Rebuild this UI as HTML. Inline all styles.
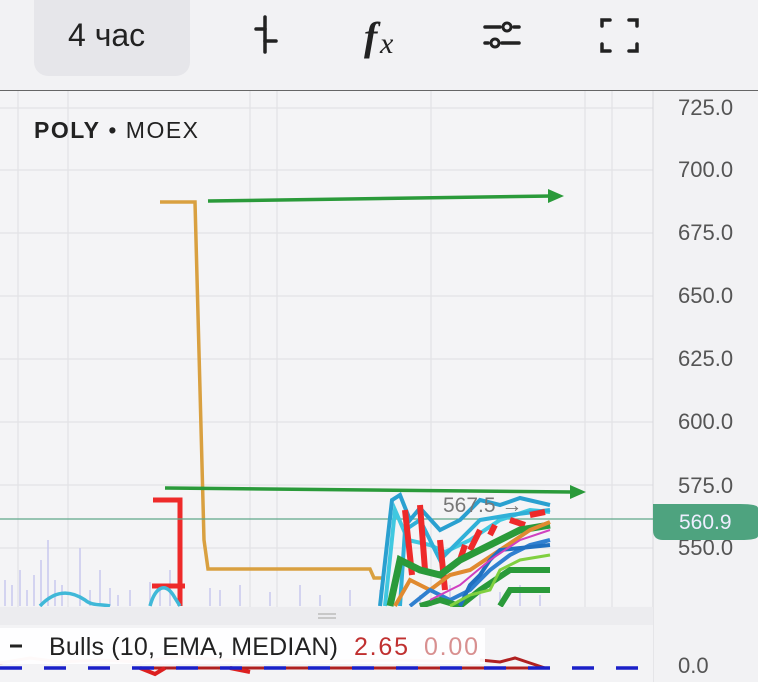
<!DOCTYPE html>
<html><head><meta charset="utf-8"><style>
html,body{margin:0;padding:0;width:758px;height:682px;overflow:hidden;background:#f3f3f5;font-family:"Liberation Sans",sans-serif}
.tb{position:absolute;left:0;top:0;width:758px;height:90px;background:#f2f2f4;border-bottom:1.5px solid #666}
.btn{position:absolute;left:34px;top:0;width:156px;height:76px;background:#e6e6ea;border-radius:0 0 14px 14px}
.lbl{position:absolute;left:68px;top:17px;font-size:32px;color:#222}
</style></head><body>
<div class="tb"><div class="btn"></div><div class="lbl">4 час</div>
<svg width="758" height="90" style="position:absolute;left:0;top:0">
<g stroke="#222" stroke-width="3.5" fill="none" stroke-linecap="round">
<line x1="265" y1="17" x2="265" y2="52"/><line x1="256" y1="29" x2="265" y2="29"/><line x1="265" y1="41" x2="276" y2="41"/>
<line x1="485" y1="27" x2="500" y2="27"/><line x1="514" y1="27" x2="519" y2="27"/><circle cx="507" cy="27" r="4" stroke-width="3"/>
<line x1="485" y1="43" x2="488" y2="43"/><line x1="502" y1="43" x2="519" y2="43"/><circle cx="495" cy="43" r="4" stroke-width="3"/>
<path d="M602 26V20H610M629 20H637V26M637 44V51H629M610 51H602V44"/>
</g>
<text x="364" y="50" font-family="Liberation Serif" font-style="italic" font-weight="bold" font-size="40" fill="#222">f</text>
<text x="380" y="53" font-family="Liberation Serif" font-style="italic" font-size="30" fill="#222">x</text>
</svg></div>
<svg width="758" height="592" style="position:absolute;left:0;top:90px" viewBox="0 90 758 592">
<rect x="0" y="91" width="653" height="515" fill="#f4f4f6"/>
<rect x="653" y="91" width="105" height="591" fill="#f2f2f4"/>
<g stroke="#e2e2e6" stroke-width="1.2">
<line x1="18" y1="91" x2="18" y2="682"/><line x1="68" y1="91" x2="68" y2="682"/><line x1="250" y1="91" x2="250" y2="682"/><line x1="277" y1="91" x2="277" y2="682"/><line x1="431" y1="91" x2="431" y2="682"/><line x1="585" y1="91" x2="585" y2="682"/><line x1="612" y1="91" x2="612" y2="682"/>
<line x1="0" y1="108" x2="653" y2="108"/><line x1="0" y1="170" x2="653" y2="170"/><line x1="0" y1="233" x2="653" y2="233"/><line x1="0" y1="296" x2="653" y2="296"/><line x1="0" y1="359" x2="653" y2="359"/><line x1="0" y1="422" x2="653" y2="422"/><line x1="0" y1="485" x2="653" y2="485"/><line x1="0" y1="548" x2="653" y2="548"/>
</g>
<line x1="653" y1="91" x2="653" y2="682" stroke="#d8d8dc"/>
<g font-size="22" fill="#555">
<text x="678" y="115">725.0</text><text x="678" y="177">700.0</text><text x="678" y="240">675.0</text><text x="678" y="303">650.0</text><text x="678" y="366">625.0</text><text x="678" y="429">600.0</text><text x="678" y="493">575.0</text><text x="678" y="555">550.0</text><text x="678" y="673">0.0</text></g>
<text x="34" y="138" font-size="23" fill="#222" textLength="164"><tspan font-weight="bold">POLY</tspan> • MOEX</text>
<g stroke="#c8c8ee" stroke-width="1.5">
<path d="M5 606V580M12 606V585M20 606V570M27 606V590M34 606V575M41 606V560M48 606V540M55 606V580M62 606V585M80 606V548M90 606V590M100 606V570M110 606V588M118 606V595M130 606V590M150 606V582M160 606V590M170 606V570M210 606V588M220 606V590M240 606V585M270 606V592M300 606V585M320 606V595M350 606V590M380 606V590M420 606V595M450 606V585M480 606V588M500 606V592M520 606V585M540 606V595"/></g>
<path d="M160 202H190L195 202L204 540L208 569H370L374 578H385" stroke="#d9a040" stroke-width="3.5" fill="none"/>
<path d="M153 500H180V606M152 586H185" stroke="#ee2a2a" stroke-width="5" fill="none"/>
<path d="M40 606C55 590 70 590 85 600C92 606 100 604 110 606M150 606C155 588 165 580 175 598L180 606" stroke="#40b8d8" stroke-width="3.5" fill="none"/>
<line x1="0" y1="519" x2="653" y2="519" stroke="#5fa88a" stroke-width="1.3"/>
<path d="M653 504H740Q758 504 758 508V536Q758 540 740 540H663Q653 540 653 530Z" fill="#4ea37f"/>
<text x="679" y="529" font-size="21" fill="#eef">560.9</text>
<g fill="none" stroke-width="4">
<path d="M380 606L392 500L400 495L410 520L420 508L440 530L460 520L480 500L500 505L520 498L550 505" stroke="#2aa0d0"/>
<path d="M385 606L395 510L408 540L430 545L445 552L470 540L500 520L530 510L550 512" stroke="#40c8e0"/>
<path d="M400 606L405 530L420 520L440 560L460 540L480 520L510 515L550 510" stroke="#30b0d8"/>
<path d="M405 510L412 575M420 505L425 570M440 540L445 590M470 550L480 530M510 520L525 525M460 560L465 545M490 535L495 525M530 515L545 512" stroke="#ee2a2a" stroke-width="6"/>
<path d="M390 606L400 560L420 570L440 575L460 560L480 550L500 540L520 530L550 525" stroke="#2a9a3a" stroke-width="7"/>
<path d="M395 606L410 580L430 590L450 575L470 570L500 550L530 530L550 522" stroke="#e08a30"/>
<path d="M410 606L430 590L450 600L470 590L490 570L510 555L530 545L550 540" stroke="#3080d0"/>
<path d="M420 606L440 600L460 606L480 590L495 580L510 570L550 570M500 606L510 590L550 590" stroke="#2a9a3a" stroke-width="6"/>
<path d="M460 606L470 585L480 575L490 560L500 550L550 545" stroke="#2070c0"/>
<path d="M450 606L470 595L490 590L500 570L520 560L550 555" stroke="#80d040" stroke-width="3"/>
<path d="M430 600L460 585L490 560L520 540L550 530" stroke="#d040c0" stroke-width="2"/>
</g>
<text x="443" y="512" font-size="21" fill="#777">567.5 →</text>
<path d="M208 201L552 196" stroke="#2a9a3a" stroke-width="3.5"/><path d="M548 189L564 196L548 203Z" fill="#2a9a3a"/>
<path d="M165 488L572 492" stroke="#2a9a3a" stroke-width="3.5"/><path d="M570 485L586 492L570 499Z" fill="#2a9a3a"/>
<rect x="0" y="607" width="653" height="18" fill="#ececef"/>
<path d="M318 614H336M318 618H336" stroke="#bbb" stroke-width="1.5"/>
<rect x="0" y="625" width="653" height="57" fill="#f3f3f5"/>
<path d="M0 663L30 658L60 662L100 660L140 662L180 656L220 660L300 662L400 660L470 662" stroke="#f0b0b0" stroke-width="3" fill="none"/>
<path d="M480 660L500 662L515 658L530 663L545 668L140 668" stroke="#b02020" stroke-width="3" fill="none"/>
<path d="M140 668L155 674L165 668M230 668L250 672" stroke="#dd2020" stroke-width="4" fill="none"/>
<rect x="0" y="628" width="485" height="36" fill="#fff" opacity="0.92"/>
<line x1="10" y1="646" x2="22" y2="646" stroke="#222" stroke-width="3"/>
<text x="49" y="655" font-size="25" fill="#222" textLength="289">Bulls (10, EMA, MEDIAN)</text>
<text x="354" y="655" font-size="25" fill="#c03030" textLength="54">2.65</text>
<text x="424" y="655" font-size="25" fill="#d89090" textLength="54">0.00</text>
<line x1="0" y1="668" x2="653" y2="668" stroke="#1a20c8" stroke-width="3.5" stroke-dasharray="22,22"/>
</svg>
</body></html>
